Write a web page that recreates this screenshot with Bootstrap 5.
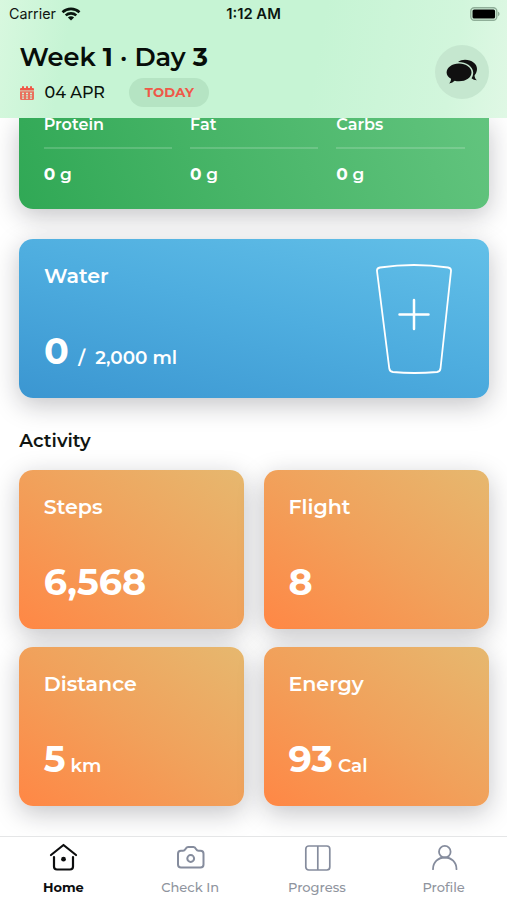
<!DOCTYPE html>
<html lang="en">
<head>
<meta charset="utf-8">
<meta name="viewport" content="width=device-width, initial-scale=1">
<title>Week 1 · Day 3</title>
<link href="https://cdn.jsdelivr.net/npm/bootstrap@5.3.0/dist/css/bootstrap.min.css" rel="stylesheet">
<style>
body{font-family:Montserrat,Inter,"Open Sans",sans-serif;color:#101511;background:#fff;height:900px;line-height:1}
svg{display:block;flex:none}
.app-head{height:118px;z-index:2;background:linear-gradient(100deg,#d8f8df 0%,#c6f4d4 14%,#c6f4d4 62%,#d2f6dc 88%,#e0f8e5 100%)}
.status{height:28px;font:400 14.3px/28px Inter,sans-serif;padding:0 7px 0 9px}
.status b{font-weight:600;font-size:14.800px;color:#0b160f;margin-left:-2px}
.head-main{padding:13px 18px 0 19.5px}
.wk{font-size:25.7px;font-weight:600;line-height:32px;color:#070d09}
.wk b{font-weight:700}
.date-row{height:29px;font-size:16px;font-weight:500;color:#08100b;margin-top:5px}
.dt{margin:1px 24.500px 0 11px}
.today{width:80px;height:29px;line-height:29px;background:#b5e4c3;color:#ef5848;font-size:13.2px;font-weight:700;letter-spacing:.2px}
.chat{width:54px;height:54px;background:#c5e7cf;margin-top:3.500px}
.feed{padding:0 18.3px 0 19.3px}
.tile{border-radius:14px;color:#fff;box-shadow:0 7px 26px rgba(20,20,30,.25)}
.macro{display:grid;grid-template-columns:repeat(3,1fr);height:90.6px;border-radius:0 0 14px 14px;background:linear-gradient(68deg,#30a855,#48b568 45%,#62c47e);padding:0 24px 0 24.400px;gap:18px}
.macro .lbl{font-size:16px;font-weight:600;line-height:14px}
.macro .rule{height:2px;background:rgba(255,255,255,.17);margin:15px 0 16px}
.macro .amt{font-size:17px;font-weight:600;line-height:18px}
.macro .amt b{font-weight:700}
.water{height:159px;margin-top:30.4px;background:linear-gradient(14deg,#3b96d1,#4eaddf 52%,#63c0e8);padding:25px 36px 0 24.7px}
.ttl{font-size:20.6px;font-weight:600;line-height:23px}
.big{font-size:36.6px;font-weight:700;line-height:38px;margin-top:45.2px}
.unit{font-size:18.4px;font-weight:600}
.slash{margin:0 10px 0 9.500px}
.by{margin-left:5px}
.act-h{font-size:18.4px;font-weight:600;line-height:24px;margin:31.500px 0 16.500px}
.acts{display:grid;grid-template-columns:1fr 1fr;gap:18.2px 20px}
.act{height:159px;padding:25px 24px 0 24.4px;background:linear-gradient(to top right,#ff8745,#f1a15b 50%,#e6b86f)}
.tabs{height:64px;z-index:2;border-top:1px solid #e5e6e7;font-size:13px;font-weight:500;color:#8f949e;background:#fff;padding-top:6px}
.tabs svg{margin-bottom:7.500px;color:#858c9d}
.tabs .on,.tabs .on svg{color:#0c0d0e}
.tabs .on{font-weight:700}
</style>
<script src="https://cdn.jsdelivr.net/npm/bootstrap@5.3.0/dist/js/bootstrap.bundle.min.js"></script>
</head>
<body class="d-flex flex-column overflow-hidden m-0">
<header class="app-head flex-shrink-0 position-relative">
  <div class="status row g-0">
    <div class="col-4 d-flex align-items-center"><span>Carrier</span>
      <svg style="margin-left:5px" width="20" height="14" viewBox="0 0 20 14" fill="none" stroke="#0b160f" stroke-width="2.6"><path d="M1.500 5.200C6.400.7 13.600.7 18.500 5.200M4.700 8.400c3-2.700 7.600-2.700 10.600 0"/><path d="M10 13.500 6.900 10.400c1.800-1.500 4.400-1.500 6.200 0z" fill="#0b160f" stroke="none"/></svg>
    </div>
    <div class="col-4 text-center"><b>1:12 AM</b></div>
    <div class="col-4 d-flex align-items-center justify-content-end">
      <svg width="30" height="14" viewBox="0 0 30 14"><rect x=".8" y=".8" width="26" height="12.400" rx="3.500" fill="none" stroke="#8fae98" stroke-width="1.400"/><rect x="2.500" y="2.500" width="22.600" height="9" rx="1.600"/><path d="M28 4.800c2 .6 2 3.800 0 4.400z" fill="#8fae98"/></svg>
    </div>
  </div>
  <div class="head-main d-flex justify-content-between">
    <div>
      <div class="wk">Week <b>1</b> · Day <b>3</b></div>
      <div class="date-row d-flex align-items-center">
        <svg width="14" height="14" viewBox="0 0 14 14" fill="#ef5848"><path d="M0 3.200c0-.8.500-1.200 1.200-1.200H2V.3h2V2h2V.3h2V2h2V.3h2V2h.8c.7 0 1.200.4 1.200 1.200V4.500H0z"/><path fill-rule="evenodd" d="M0 5.300h14v7.500c0 .7-.5 1.200-1.200 1.200H1.200C.5 14 0 13.500 0 12.800zM2 6.800v1.400h2V6.800zm4 0v1.400h2V6.800zm4 0v1.400h2V6.800zM2 9.200v1.300h2V9.200zm4 0v1.300h2V9.200zm4 0v1.300h2V9.200zM2 11.500v1.200h2v-1.200zm4 0v1.200h2v-1.200zm4 0v1.200h2v-1.200z" opacity=".85"/></svg>
        <span class="dt">04 APR</span>
        <span class="today rounded-pill text-center">TODAY</span>
      </div>
    </div>
    <div class="chat rounded-circle d-flex align-items-center justify-content-center">
      <svg width="32" height="26" viewBox="0 0 32 26" fill="#101010"><path d="M13 4.500c7 0 12.500 4 12.500 9S20 22.300 13 22.300c-1.500 0-3-.2-4.300-.6-1.300 1.200-3 2.300-5.600 2.800 1.300-1.200 2-2.800 1.900-4.700C2.200 18.200.6 16 .6 13.500c0-5 5.400-9 12.400-9z"/><path d="M12 2.900C14 1.500 16.500.8 19 .8c6.700 0 12 4 12 9.200 0 2.600-1.100 4.700-2.400 6.300 0 2 .6 3.600 2.300 5-2.300-.1-4-.7-5.400-2 1.200-1.600 1.700-3.500 1.700-5.700C27.200 7.500 20.500 3 12 2.900z"/></svg>
    </div>
  </div>
</header>

<main class="feed flex-grow-1">
  <section class="tile macro">
    <div><div class="lbl">Protein</div><div class="rule"></div><div class="amt"><b>0</b> g</div></div>
    <div><div class="lbl">Fat</div><div class="rule"></div><div class="amt"><b>0</b> g</div></div>
    <div><div class="lbl">Carbs</div><div class="rule"></div><div class="amt"><b>0</b> g</div></div>
  </section>

  <section class="tile water d-flex justify-content-between">
    <div>
      <div class="ttl">Water</div>
      <div class="big">0<span class="unit slash">/</span><span class="unit">2,000 ml</span></div>
    </div>
    <svg width="78" height="112" viewBox="0 0 78 112" fill="none" stroke="#fff" stroke-width="1.800" stroke-linecap="round"><path d="M5 3.500Q39-1.500 73 3.500Q76.300 4.200 76 7L65.500 104.500Q65 107.600 62 108Q39 110 18 108Q14.800 107.600 14.300 104.500L2 7Q1.700 4.200 5 3.500z"/><path d="M39 36v29M24.500 50.500h29" stroke-width="2.500"/></svg>
  </section>

  <h2 class="act-h">Activity</h2>
  <section class="acts">
    <div class="tile act"><div class="ttl">Steps</div><div class="big">6,568</div></div>
    <div class="tile act"><div class="ttl">Flight</div><div class="big">8</div></div>
    <div class="tile act"><div class="ttl">Distance</div><div class="big">5<span class="unit by">km</span></div></div>
    <div class="tile act"><div class="ttl">Energy</div><div class="big">93<span class="unit by">Cal</span></div></div>
  </section>
</main>

<nav class="tabs row g-0 flex-shrink-0 text-center position-relative">
  <div class="col on d-flex flex-column align-items-center"><svg width="30" height="30" viewBox="0 0 30 30" fill="none" stroke="currentColor" stroke-width="2.200" stroke-linecap="round" stroke-linejoin="round"><path d="M3 12 15.500 2 28 12M6 14v9.500q0 3 3 3h13q3 0 3-3V14"/><circle cx="15.500" cy="16.200" r="2.400" fill="currentColor" stroke="none"/></svg>Home</div>
  <div class="col d-flex flex-column align-items-center"><svg width="30" height="30" viewBox="0 0 30 30" fill="none" stroke="currentColor" stroke-width="2"><path d="M6 7.800h2Q9.500 7.800 10.300 6.300 11.400 3.900 13 3.900h5.500q1.600 0 2.700 2.400.8 1.500 2.300 1.500h2q3 0 3 3V21.500q0 3-3 3H6q-3 0-3-3V10.800q0-3 3-3z" stroke-linejoin="round"/><circle cx="15.700" cy="15.500" r="3.400"/></svg>Check In</div>
  <div class="col d-flex flex-column align-items-center"><svg width="30" height="30" viewBox="0 0 30 30" fill="none" stroke="currentColor" stroke-width="1.700"><rect x="3.800" y="3" width="24" height="24" rx="3"/><path d="M15.800 3v24"/></svg>Progress</div>
  <div class="col d-flex flex-column align-items-center"><svg width="30" height="30" viewBox="0 0 30 30" fill="none" stroke="currentColor" stroke-width="1.800" stroke-linecap="round"><circle cx="15.800" cy="8.700" r="5.800"/><path d="M4 26.200c0-7 5.200-11.700 11.800-11.700s11.700 4.700 11.700 11.700"/></svg>Profile</div>
</nav>
</body>
</html>
